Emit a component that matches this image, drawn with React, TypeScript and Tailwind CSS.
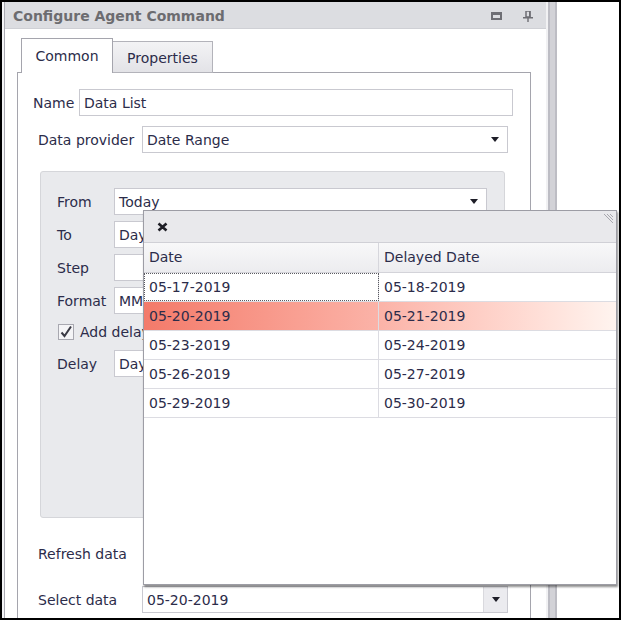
import React from 'react'

const font = { fontFamily: '"DejaVu Sans", Verdana, sans-serif' }

function Arrow() {
  return (
    <svg width="8" height="5" viewBox="0 0 8 5" className="shrink-0">
      <path d="M0 0h8L4 5z" fill="#1e1e28" />
    </svg>
  )
}

function Field({ value, width, combo, button }: { value?: string; width: string; combo?: boolean; button?: boolean }) {
  return (
    <div className={`${width} h-[27px] flex items-center bg-white border border-[#c9c9d0] text-[#2c2c4a]`}>
      <span className="flex-1 pl-[4px] pt-[1px] whitespace-nowrap overflow-hidden">{value}</span>
      {combo && !button && (
        <span className="w-[24px] flex justify-center">
          <Arrow />
        </span>
      )}
      {button && (
        <span className="w-[24px] h-full flex items-center justify-center bg-[#ebebef] border-l border-[#d9d9de]">
          <Arrow />
        </span>
      )}
    </div>
  )
}

function GroupRow({ label, children }: { label: string; children: React.ReactNode }) {
  return (
    <div className="flex items-center h-[27px]">
      <span className="w-[57px] shrink-0 pt-[1px]">{label}</span>
      {children}
    </div>
  )
}

const rows = [
  ['05-17-2019', '05-18-2019'],
  ['05-20-2019', '05-21-2019'],
  ['05-23-2019', '05-24-2019'],
  ['05-26-2019', '05-27-2019'],
  ['05-29-2019', '05-30-2019'],
]

export default function App() {
  return (
    <div className="relative w-[626px] h-[625px] bg-white overflow-hidden text-[14px] text-[#2c2c4a]" style={font}>
      <div className="w-[621px] h-[620px] border-2 border-black flex overflow-hidden">
        <div className="w-[2px] shrink-0 bg-[#f4f4f6]" />

        {/* Dock panel */}
        <div className="w-[542px] shrink-0 flex flex-col border-l border-[#a9a9b1] bg-white">
          <div className="h-[27px] shrink-0 flex items-center justify-between pl-[8px] pr-[13px] pt-[2px] bg-[#dcdde1] border-b border-[#cfd0d5]">
            <span className="font-bold text-[#6c6c70]">Configure Agent Command</span>
            <div className="flex items-center gap-[21px]">
              <svg width="11" height="8" viewBox="0 0 11 8">
                <rect x="1" y="1.5" width="9" height="5.5" fill="none" stroke="#6e6e74" strokeWidth="2" />
                <rect x="0" y="0" width="11" height="3" fill="#6e6e74" />
              </svg>
              <svg width="10" height="11" viewBox="0 0 10 11">
                <rect x="3" y="0" width="4" height="6" fill="none" stroke="#6e6e74" strokeWidth="1.5" />
                <rect x="6" y="0" width="1.5" height="6" fill="#6e6e74" />
                <rect x="0" y="6" width="10" height="1.5" fill="#6e6e74" />
                <rect x="4.3" y="7" width="1.4" height="4" fill="#6e6e74" />
              </svg>
            </div>
          </div>

          <div className="flex-1 flex flex-col pt-[9px] pl-[12px]">
            {/* Tabs */}
            <div className="flex items-end pl-[4px] h-[35px] relative z-10 -mb-px">
              <div className="w-[92px] h-[35px] flex items-center justify-center bg-white border border-b-0 border-[#a5a5ad] pt-[1px]">
                Common
              </div>
              <div className="w-[100px] h-[32px] flex items-center justify-center border border-l-0 border-[#b3b3ba] bg-gradient-to-b from-[#f3f3f5] to-[#e3e3e7] pt-[2px]">
                Properties
              </div>
            </div>

            <div className="w-[514px] flex-1 border border-b-0 border-[#a5a5ad] flex flex-col">
              <div className="flex items-center mt-[16px] pl-[15px]">
                <span className="w-[46px] pt-[1px]">Name</span>
                <Field value="Data List" width="w-[434px]" />
              </div>

              <div className="flex items-center mt-[10px] pl-[20px]">
                <span className="w-[104px] pt-[1px]">Data provider</span>
                <Field value="Date Range" width="w-[366px]" combo />
              </div>

              {/* Date range settings */}
              <div className="mt-[18px] ml-[22px] w-[465px] h-[347px] shrink-0 rounded-[3px] bg-[#e9eaed] border border-[#d5d6da] pt-[16px] pl-[16px] flex flex-col gap-[6px]">
                <GroupRow label="From">
                  <Field value="Today" width="w-[373px]" combo />
                </GroupRow>
                <GroupRow label="To">
                  <Field value="Days from today" width="w-[373px]" combo />
                </GroupRow>
                <GroupRow label="Step">
                  <Field value="" width="w-[373px]" />
                </GroupRow>
                <GroupRow label="Format">
                  <Field value="MM-dd-yyyy" width="w-[373px]" />
                </GroupRow>
                <div className="flex items-center h-[24px] pl-[1px] gap-[6px]">
                  <span className="w-[16px] h-[16px] border border-[#a8a8b0] bg-[#f4f4f6] flex items-center justify-center">
                    <svg width="14" height="14" viewBox="0 0 14 14">
                      <path d="M2.5 7.5L5.5 11L12 1.5" fill="none" stroke="#3a3a44" strokeWidth="2" />
                    </svg>
                  </span>
                  <span className="pt-[1px]">Add delay</span>
                </div>
                <GroupRow label="Delay">
                  <Field value="Days" width="w-[373px]" combo />
                </GroupRow>
              </div>

              <div className="flex items-center h-[27px] mt-[22px] pl-[20px]">
                <span className="pt-[1px]">Refresh data</span>
              </div>

              <div className="flex items-center mt-[19px] pl-[20px]">
                <span className="w-[104px] pt-[1px]">Select data</span>
                <Field value="05-20-2019" width="w-[366px]" button />
              </div>
            </div>
          </div>
        </div>

        {/* Splitter */}
        <div className="w-[11px] shrink-0 bg-[#f1f1f3] border-l-[2px] border-[#f1f1f3] flex">
          <div className="w-[9px] bg-[#d2d2d7] border-l-2 border-r-2 border-[#bdbdc4]" />
        </div>
        <div className="flex-1 bg-white" />
      </div>

      {/* Lookup popup */}
      <div className="absolute left-[143px] top-[210px] w-[474px] h-[375px] bg-white border border-[#9d9da5] shadow-[1px_2px_2px_rgba(0,0,0,0.45)] flex flex-col">
        <div className="h-[32px] shrink-0 flex items-center justify-between pl-[13px] pr-[3px] bg-[#e9e9ec] border-b border-[#d0d0d6]">
          <svg width="11" height="10" viewBox="0 0 11 10">
            <path d="M1.5 1.5L9.5 8.5M9.5 1.5L1.5 8.5" stroke="#1f1f26" strokeWidth="2.6" />
          </svg>
          <svg width="12" height="12" viewBox="0 0 12 12" className="self-start mt-[3px]">
            <path d="M3 0L12 9M6 0L12 6M9 0L12 3" stroke="#a7a7ae" strokeWidth="1" />
          </svg>
        </div>
        <div className="h-[30px] shrink-0 flex bg-gradient-to-b from-[#f8f8f9] to-[#ececef] border-b border-[#d3d3d9]">
          <div className="w-[235px] flex items-center pl-[5px] border-r border-[#d6d6dc]">Date</div>
          <div className="flex-1 flex items-center pl-[5px]">Delayed Date</div>
        </div>
        {rows.map(([a, b], i) => (
          <div
            key={a}
            className={`h-[29px] shrink-0 flex border-b border-[#dcdce2] ${
              i === 1 ? 'bg-gradient-to-r from-[#f37a6a] via-[#fbb3a8] to-[#fff4ef]' : ''
            }`}
          >
            <div
              className={`w-[235px] flex items-center pl-[5px] border-r border-[#dcdce2] ${
                i === 0 ? 'outline-1 outline-dotted outline-[#5a5a60] -outline-offset-1' : ''
              }`}
            >
              {a}
            </div>
            <div className="flex-1 flex items-center pl-[5px]">{b}</div>
          </div>
        ))}
      </div>
    </div>
  )
}
